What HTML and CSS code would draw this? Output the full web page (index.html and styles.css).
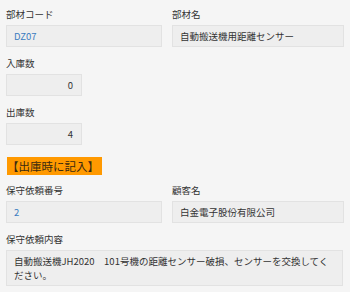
FILE: index.html
```html
<!DOCTYPE html>
<html lang="ja">
<head>
<meta charset="utf-8">
<link rel="stylesheet" href="styles.css">
</head>
<body>
<div class="form">
  <div class="row two">
    <div class="field">
      <div class="label">部材コード</div>
      <div class="box link">DZ07</div>
    </div>
    <div class="field">
      <div class="label">部材名</div>
      <div class="box">自動搬送機用距離センサー</div>
    </div>
  </div>
  <div class="field">
    <div class="label">入庫数</div>
    <div class="box num">0</div>
  </div>
  <div class="field">
    <div class="label">出庫数</div>
    <div class="box num">4</div>
  </div>
  <div class="badge">【出庫時に記入】</div>
  <div class="row two">
    <div class="field">
      <div class="label">保守依頼番号</div>
      <div class="box link">2</div>
    </div>
    <div class="field">
      <div class="label">顧客名</div>
      <div class="box">白金電子股份有限公司</div>
    </div>
  </div>
  <div class="field">
    <div class="label">保守依頼内容</div>
    <div class="box multi">自動搬送機JH2020　101号機の距離センサー破損、センサーを交換してください。</div>
  </div>
</div>
</body>
</html>
```
FILE: styles.css
```css
html, body {
  margin: 0;
  padding: 0;
  background: #f5f5f5;
}
body {
  font-family: "Noto Sans CJK JP", "Noto Sans", sans-serif;
  font-size: 9.5px;
  color: #333;
}
.form {
  padding: 6px 6px 0 6px;
  display: flex;
  flex-direction: column;
}
.row.two {
  display: grid;
  grid-template-columns: 156px 172px;
  column-gap: 10px;
}
.field {
  margin-bottom: 8px;
}
.label {
  line-height: 16px;
  margin-bottom: 3px;
}
.box {
  box-sizing: border-box;
  height: 22px;
  line-height: 20px;
  background: #eeeeee;
  border: 1px solid #e2e2e2;
  padding: 0 7px;
  white-space: nowrap;
  overflow: hidden;
}
.box.link {
  color: #3a7cc0;
}
.box.num {
  width: 76px;
  text-align: right;
  padding-right: 8px;
}
.box.multi {
  height: 36px;
  width: 337px;
  white-space: normal;
  line-height: 14px;
  padding: 3px 8px 3px 7px;
}
.badge {
  align-self: flex-start;
  background: #ff9900;
  color: #3a2a10;
  font-size: 11.5px;
  line-height: 18px;
  height: 18px;
  padding: 0 3px 0 0;
  margin: 4px 0 7px 1px;
}
```
